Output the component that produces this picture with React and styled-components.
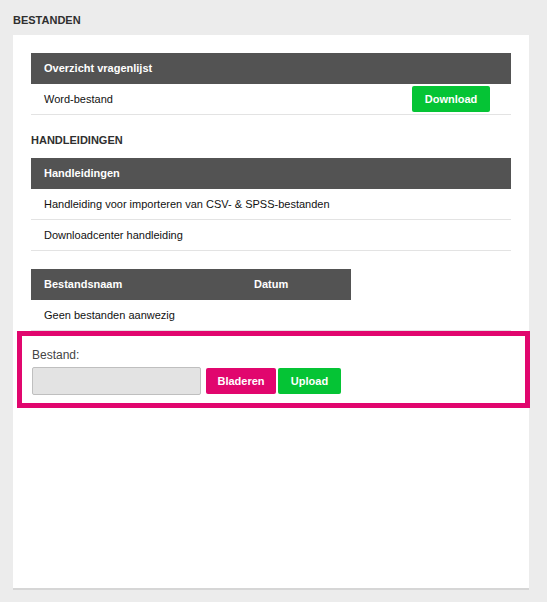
import React from 'react'
import styled, { createGlobalStyle } from 'styled-components'

const GlobalStyle = createGlobalStyle`
  html, body {
    margin: 0;
    padding: 0;
    background: #ececec;
    font-family: "Liberation Sans", Arial, sans-serif;
  }
`;

const Page = styled.div`
  padding: 13px 18px 0 13px;
`;

const PageTitle = styled.h2`
  margin: 0 0 8px;
  font-size: 11px;
  line-height: 14px;
  font-weight: 700;
  color: #2f2f2f;
  text-transform: uppercase;
`;

const Card = styled.div`
  box-sizing: border-box;
  height: 555px;
  background: #fff;
  border-bottom: 2px solid #d6d6d6;
  padding: 18px;
`;

const SectionTitle = styled.h3`
  margin: 18px 0 11px;
  font-size: 11px;
  line-height: 14px;
  font-weight: 700;
  color: #2f2f2f;
  text-transform: uppercase;
`;

const Table = styled.div`
  margin-top: ${p => p.$gap || 0}px;
`;

const HeadRow = styled.div`
  display: grid;
  grid-template-columns: ${p => p.$cols || '1fr'};
  width: ${p => p.$width || '100%'};
  height: 31px;
  background: #535353;
  color: #fff;
  font-size: 11px;
  font-weight: 700;
  line-height: 31px;
`;

const HeadCell = styled.div`
  padding-left: 13px;
`;

const Row = styled.div`
  display: flex;
  align-items: center;
  justify-content: space-between;
  height: 30px;
  padding: 0 21px 0 13px;
  border-bottom: 1px solid #e3e3e3;
  font-size: 11px;
  color: #111;
`;

const Button = styled.button`
  box-sizing: border-box;
  width: ${p => p.$w}px;
  height: 26px;
  border: none;
  border-radius: 2px;
  background: ${p => (p.$pink ? '#e1066e' : '#05c435')};
  color: #fff;
  font-family: "Liberation Sans", Arial, sans-serif;
  font-size: 11px;
  font-weight: 700;
  cursor: pointer;
  padding: 0;
`;

const UploadBox = styled.div`
  margin: 0 -19px 0 -14px;
  border: 5px solid #e1066e;
  padding: 12px 10px 8px;
`;

const Label = styled.div`
  font-size: 12px;
  line-height: 14px;
  color: #444;
  margin-bottom: 5px;
`;

const UploadRow = styled.div`
  display: flex;
  align-items: center;
  gap: 2px;
`;

const FileField = styled.div`
  box-sizing: border-box;
  width: 169px;
  height: 28px;
  background: #e3e3e3;
  border: 1px solid #bfbfbf;
  border-radius: 2px;
  margin-right: 3px;
`;

export default function App() {
  return (
    <Page>
      <GlobalStyle />
      <PageTitle>Bestanden</PageTitle>
      <Card>
        <Table>
          <HeadRow>
            <HeadCell>Overzicht vragenlijst</HeadCell>
          </HeadRow>
          <Row>
            <span>Word-bestand</span>
            <Button $w={78}>Download</Button>
          </Row>
        </Table>

        <SectionTitle>Handleidingen</SectionTitle>
        <Table>
          <HeadRow>
            <HeadCell>Handleidingen</HeadCell>
          </HeadRow>
          <Row>Handleiding voor importeren van CSV- &amp; SPSS-bestanden</Row>
          <Row>Downloadcenter handleiding</Row>
        </Table>

        <Table $gap={18}>
          <HeadRow $cols="210px 110px" $width="320px">
            <HeadCell>Bestandsnaam</HeadCell>
            <HeadCell>Datum</HeadCell>
          </HeadRow>
          <Row>Geen bestanden aanwezig</Row>
        </Table>

        <UploadBox>
          <Label>Bestand:</Label>
          <UploadRow>
            <FileField />
            <Button $pink $w={70}>Bladeren</Button>
            <Button $w={63}>Upload</Button>
          </UploadRow>
        </UploadBox>
      </Card>
    </Page>
  )
}
